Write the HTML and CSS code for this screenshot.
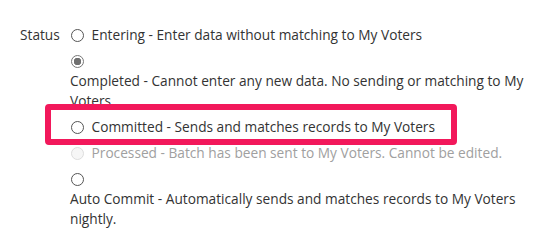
FILE: index.html
```html
<!DOCTYPE html>
<html lang="en">
<head>
    <meta charset="UTF-8">
    <title>Batch Status</title>
    <link rel="stylesheet" href="styles.css">
</head>
<body>
    <!-- Status field -->
    <div class="field">
        <div class="field-label">Status</div>
        <div class="options">
            <div class="option">
                <input type="radio" name="status" id="entering">
                <label for="entering">Entering - Enter data without matching to My Voters</label>
            </div>
            <div class="option">
                <input type="radio" name="status" id="completed" checked>
                <label for="completed">Completed - Cannot enter any new data. No sending or matching to My Voters</label>
            </div>
            <div class="option highlight">
                <input type="radio" name="status" id="committed">
                <label for="committed">Committed - Sends and matches records to My Voters</label>
            </div>
            <div class="option disabled">
                <input type="radio" name="status" id="processed" disabled>
                <label for="processed">Processed - Batch has been sent to My Voters. Cannot be edited.</label>
            </div>
            <div class="option">
                <input type="radio" name="status" id="autocommit">
                <label for="autocommit">Auto Commit - Automatically sends and matches records to My Voters nightly.</label>
            </div>
        </div>
    </div>
</body>
</html>
```

FILE: styles.css
```css
body {
    font-family: "Open Sans", "Noto Sans", sans-serif;
    font-size: 13.7px;
    color: #333;
    background-color: #fff;
    margin: 0;
    padding: 25px 0 0 20px;
}

/* Field */
.field {
    display: flex;
    line-height: 20px;
}

.field-label {
    width: 50px;
}

.options {
    width: 468px;
}

.option {
    position: relative;
    margin-bottom: 6px;
}

.option input {
    appearance: none;
    width: 13px;
    height: 13px;
    margin: 0 4px 0 1px;
    border: 1px solid #555;
    border-radius: 50%;
    vertical-align: -2px;
    background: #fff;
}

.option input:checked {
    border-color: #777;
    background: radial-gradient(circle, #6f6f6f 0 3.5px, #fff 4px);
}

.option label {
    display: inline-block;
}

.option.disabled {
    color: #a0a0a0;
}

.option.disabled input {
    border-color: #ddd;
    background: #f6f6f6;
}

/* Annotation box */
.highlight::after {
    content: "";
    position: absolute;
    left: -25px;
    top: -13px;
    width: 400px;
    height: 29px;
    border: 6px solid #f2185b;
    border-radius: 4px;
}
```
